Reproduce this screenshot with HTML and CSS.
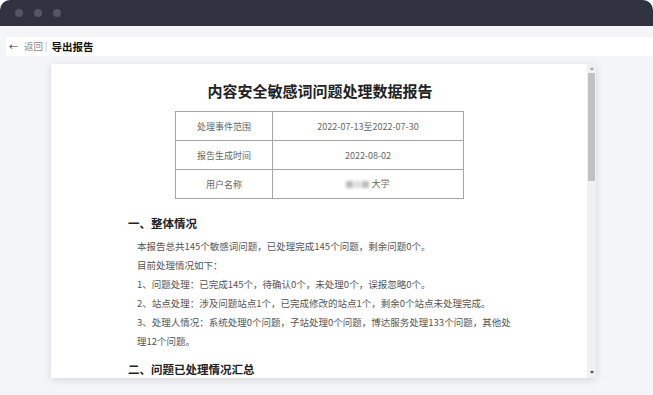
FILE: index.html
```html
<!DOCTYPE html>
<html lang="zh-CN">
<head>
    <meta charset="UTF-8">
    <title>导出报告</title>
    <link rel="stylesheet" href="styles.css">
</head>
<body>
    <div class="window">
        <div class="titlebar">
            <span class="dot"></span>
            <span class="dot"></span>
            <span class="dot"></span>
        </div>

        <div class="nav">
            <span class="nav-arrow">←</span>
            <a class="nav-back">返回</a>
            <span class="nav-sep">|</span>
            <span class="nav-title">导出报告</span>
        </div>

        <div class="doc-card">
            <div class="doc">
                <div class="report">
                    <h1 class="report-title">内容安全敏感词问题处理数据报告</h1>

                    <table class="info-table">
                        <tr>
                            <td class="label">处理事件范围</td>
                            <td class="value">2022-07-13至2022-07-30</td>
                        </tr>
                        <tr>
                            <td class="label">报告生成时间</td>
                            <td class="value">2022-08-02</td>
                        </tr>
                        <tr>
                            <td class="label">用户名称</td>
                            <td class="value"><span class="masked"><i></i><i></i><i></i></span>大学</td>
                        </tr>
                    </table>

                    <h2 class="section">一、整体情况</h2>
                    <p>本报告总共145个敏感词问题，已处理完成145个问题，剩余问题0个。</p>
                    <p>目前处理情况如下：</p>
                    <p>1、问题处理：已完成145个，待确认0个，未处理0个，误报忽略0个。</p>
                    <p>2、站点处理：涉及问题站点1个，已完成修改的站点1个，剩余0个站点未处理完成。</p>
                    <p>3、处理人情况：系统处理0个问题，子站处理0个问题，博达服务处理133个问题，其他处理12个问题。</p>

                    <h2 class="section section-last">二、问题已处理情况汇总</h2>
                </div>
            </div>
            <div class="scrollbar">
                <span class="sb-up"></span>
                <span class="sb-thumb"></span>
                <span class="sb-down"></span>
            </div>
        </div>
    </div>
</body>
</html>
```

FILE: styles.css
```css
html, body {
    margin: 0;
    padding: 0;
    background: #fff;
}
body {
    font-family: "Noto Sans CJK SC", "Liberation Sans", sans-serif;
    width: 653px;
    height: 395px;
    overflow: hidden;
}
.window {
    height: 395px;
    background: #f4f5f9;
    border-radius: 10px 10px 0 0;
    overflow: hidden;
}
.titlebar {
    height: 26px;
    background: #30333f;
    display: flex;
    align-items: center;
    gap: 11px;
    padding-left: 15px;
}
.dot {
    width: 8px;
    height: 8px;
    border-radius: 50%;
    background: #535764;
}
.nav {
    margin: 11px 0 0 6px;
    height: 19px;
    background: #fff;
    display: flex;
    align-items: center;
    font-size: 10px;
    line-height: 19px;
}
.nav-arrow {
    margin-left: 3px;
    color: #333;
    font-size: 9px;
}
.nav-back {
    margin-left: 6px;
    color: #8a8a8a;
    font-size: 9.5px;
}
.nav-sep {
    margin-left: 2px;
    color: #d5a3b4;
    font-size: 9px;
}
.nav-title {
    margin-left: 4px;
    color: #111;
    font-weight: bold;
    font-size: 10.5px;
}
.doc-card {
    margin: 8px 0 0 51px;
    width: 545px;
    height: 314px;
    background: #fff;
    box-shadow: 0 2px 8px rgba(0, 0, 0, 0.12);
    display: flex;
    overflow: hidden;
}
.doc {
    flex: 1;
    overflow: hidden;
}
.report {
    width: 386px;
    margin-left: 77px;
    padding-top: 17px;
    color: #555;
}
.report-title {
    margin: 0;
    width: 384px;
    font-size: 15px;
    line-height: 20px;
    text-align: center;
    color: #222;
}
.info-table {
    margin: 10px 0 0 47px;
    width: 289px;
    border-collapse: collapse;
    font-size: 9px;
    color: #666;
}
.info-table td {
    border: 1px solid #a6a6a6;
    height: 28px;
    padding: 0;
    text-align: center;
}
.info-table .label {
    width: 96px;
}
.masked {
    display: inline-block;
    vertical-align: middle;
    margin-right: 1px;
    filter: blur(1.5px);
}
.masked i {
    display: inline-block;
    width: 7px;
    height: 7px;
    margin-right: 1px;
    background: #bbb;
}
.masked i:nth-child(2) {
    background: #ddd;
}
.section {
    margin: 16px 0 6px;
    font-size: 11.5px;
    line-height: 16px;
    color: #222;
}
.section-last {
    margin-top: 10px;
}
.report p {
    margin: 0;
    padding-left: 9px;
    font-size: 9.5px;
    line-height: 19px;
}
.scrollbar {
    width: 9px;
    background: #f1f1f1;
    display: flex;
    flex-direction: column;
    align-items: center;
}
.sb-up {
    margin-top: 3px;
    border-left: 2.5px solid transparent;
    border-right: 2.5px solid transparent;
    border-bottom: 3px solid #a3a3a3;
}
.sb-thumb {
    margin-top: 3px;
    width: 7px;
    height: 108px;
    background: #c1c1c1;
}
.sb-down {
    margin-top: auto;
    margin-bottom: 4px;
    border-left: 2.5px solid transparent;
    border-right: 2.5px solid transparent;
    border-top: 3px solid #505050;
}
```
